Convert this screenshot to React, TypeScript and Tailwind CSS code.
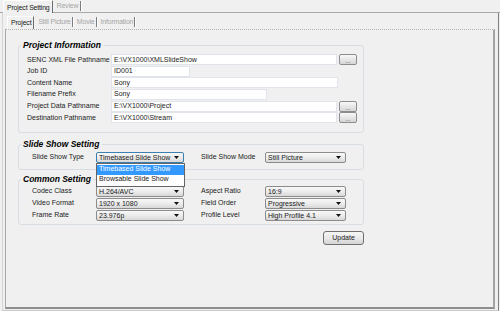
import React from "react";

function Arrow() {
    return (
        <svg width="5" height="3" viewBox="0 0 5 3" className="shrink-0">
            <path d="M0 0H5L2.5 3Z" fill="#111" />
        </svg>
    );
}

function Select({ value, className = "", focused = false }: { value: string; className?: string; focused?: boolean }) {
    return (
        <div
            className={`h-[11px] flex items-center justify-between pl-[2px] pr-[4px] rounded-[2px] border bg-linear-to-b from-[#f8f8f8] via-[#ececec] to-[#d8d8d8] ${
                focused ? "border-[#3c7fb1]" : "border-[#8c8c8c]"
            } ${className}`}
        >
            <span className="leading-none whitespace-nowrap">{value}</span>
            <Arrow />
        </div>
    );
}

function Field({ value, className = "" }: { value: string; className?: string }) {
    return (
        <div className={`h-[11px] bg-white border border-[#e1e4ea] flex items-center pl-[2px] whitespace-nowrap ${className}`}>
            {value}
        </div>
    );
}

function Dots() {
    return (
        <div className="ml-[2px] w-[18px] h-[11px] rounded-[2px] border border-[#8c8c8c] bg-linear-to-b from-[#f8f8f8] to-[#d6d6d6] flex items-end justify-center text-[6px] leading-[6px] text-[#333]">
            ...
        </div>
    );
}

function Group({ title, className = "", children }: { title: string; className?: string; children: React.ReactNode }) {
    return (
        <fieldset className={`w-[346px] border border-[#d8dde3] rounded-[3px] ${className}`}>
            <legend className="ml-[2px] px-[2px] text-[8.5px] font-bold italic leading-[11px] text-black">{title}</legend>
            {children}
        </fieldset>
    );
}

function InfoRow({ label, children }: { label: string; children: React.ReactNode }) {
    return (
        <div className="flex items-center h-[11.6px]">
            <span className="w-[84px] shrink-0 whitespace-nowrap">{label}</span>
            {children}
        </div>
    );
}

function PairRow({ l1, v1, l2, v2 }: { l1: string; v1: string; l2: string; v2: string }) {
    return (
        <div className="flex items-center h-[12px] pl-[13px]">
            <span className="w-[64px] shrink-0">{l1}</span>
            <Select value={v1} className="w-[88px]" />
            <span className="ml-[17px] w-[64px] shrink-0">{l2}</span>
            <Select value={v2} className="w-[81px]" />
        </div>
    );
}

function Sep() {
    return <span className="w-[2px] h-[10px] border-l border-[#7c7c7c] border-r border-r-white" />;
}

function InactiveTab({ label }: { label: string }) {
    return (
        <div className="flex items-center h-[12px]">
            <span className="pl-[3px] pr-[1px] text-[#a6a6a6] whitespace-nowrap tracking-[-0.2px]">{label}</span>
            <Sep />
        </div>
    );
}

export default function App() {
    return (
        <div className="w-[500px] h-[311px] bg-[#f0f0f0] text-[7px] text-[#1a1a1a] font-['Liberation_Sans',Arial,sans-serif] overflow-hidden">
            {/* Top tabs */}
            <div className="flex h-[13px]">
                <div className="w-[3px] border-b border-[#a9a9a9]" />
                <div className="pt-[3px] pl-[3px] pr-[2px] leading-[8px] tracking-[-0.2px] border-l border-t border-[#fdfdfd] border-r border-r-[#6e6e6e] rounded-t-[1px] whitespace-nowrap">
                    Project Setting
                </div>
                <div className="flex items-center pl-[4px] border-b border-[#a9a9a9]">
                    <span className="pr-[2px] text-[#a6a6a6] tracking-[-0.2px]">Review</span>
                    <Sep />
                </div>
                <div className="flex-1 border-b border-[#a9a9a9]" />
            </div>

            {/* Outer panel */}
            <div className="ml-[2px] w-[497px] h-[298px] border-l border-[#d6d6d6] border-r border-r-[#7e7e7e] border-b border-b-[#c8c8c8]">
                {/* Sub tabs */}
                <div className="flex h-[16px] items-end pl-[4px]">
                    <div className="h-[13px] flex items-center pl-[3px] pr-[2px] tracking-[-0.2px] border-l border-t border-[#fdfdfd] border-r border-r-[#6e6e6e]">
                        Project
                    </div>
                    <div className="flex items-center pl-px pb-[1px]">
                        <InactiveTab label="Still Picture" />
                        <InactiveTab label="Movie" />
                        <InactiveTab label="Information" />
                    </div>
                </div>

                {/* Inner panel */}
                <div className="ml-[2px] w-[490px] h-[280px] border-t border-[#b4b4b4] [border-top-style:dotted] border-l border-l-[#a8a8a8] border-r-2 border-r-[#a4a4a4] border-b-2 border-b-[#8e8e8e] pl-[12px] pt-[10px]">
                    <Group title="Project Information">
                        <div className="pt-[3px] pb-[8px] pl-[8px]">
                            <InfoRow label="SENC XML File Pathname">
                                <Field value="E:\VX1000\XMLSlideShow" className="w-[226px]" />
                                <Dots />
                            </InfoRow>
                            <InfoRow label="Job ID">
                                <Field value="ID001" className="w-[79px]" />
                            </InfoRow>
                            <InfoRow label="Content Name">
                                <Field value="Sony" className="w-[227px]" />
                            </InfoRow>
                            <InfoRow label="Filename Prefix">
                                <Field value="Sony" className="w-[156px]" />
                            </InfoRow>
                            <InfoRow label="Project Data Pathname">
                                <Field value="E:\VX1000\Project" className="w-[226px]" />
                                <Dots />
                            </InfoRow>
                            <InfoRow label="Destination Pathname">
                                <Field value="E:\VX1000\Stream" className="w-[226px]" />
                                <Dots />
                            </InfoRow>
                        </div>
                    </Group>

                    <Group title="Slide Show Setting" className="mt-[6px]">
                        <div className="flex items-center h-[11px] pl-[13px] mt-[2px] mb-[6px]">
                            <span className="w-[64px] shrink-0">Slide Show Type</span>
                            <div className="relative">
                                <Select value="Timebased Slide Show" className="w-[88px]" focused />
                                {/* open dropdown list */}
                                <div className="absolute left-0 top-full w-[89px] z-10 bg-white border border-[#646464] py-px">
                                    <div className="h-[10px] flex items-center pl-[2px] bg-[#3399ff] text-white whitespace-nowrap">
                                        Timebased Slide Show
                                    </div>
                                    <div className="h-[10px] flex items-center pl-[2px] whitespace-nowrap">Browsable Slide Show</div>
                                </div>
                            </div>
                            <span className="ml-[17px] w-[64px] shrink-0">Slide Show Mode</span>
                            <Select value="Still Picture" className="w-[81px]" />
                        </div>
                    </Group>

                    <Group title="Common Setting" className="mt-[4px]">
                        <div className="pt-[1px] pb-[2px]">
                            <PairRow l1="Codec Class" v1="H.264/AVC" l2="Aspect Ratio" v2="16:9" />
                            <PairRow l1="Video Format" v1="1920 x 1080" l2="Field Order" v2="Progressive" />
                            <PairRow l1="Frame Rate" v1="23.976p" l2="Profile Level" v2="High Profile 4.1" />
                        </div>
                    </Group>

                    <div className="w-[346px] flex justify-end mt-[6px]">
                        <button className="w-[41px] h-[14px] rounded-[3px] border border-[#707070] bg-linear-to-b from-[#f6f6f6] via-[#e9e9e9] to-[#d4d4d4] text-[7px] leading-none text-[#1a1a1a]">
                            Update
                        </button>
                    </div>
                </div>
            </div>
        </div>
    );
}
